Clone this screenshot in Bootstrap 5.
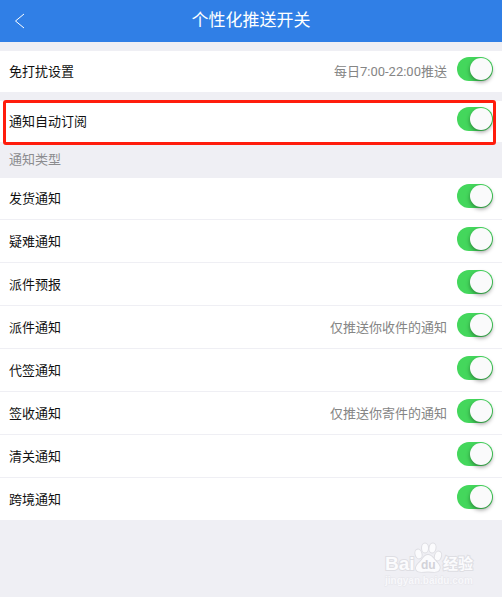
<!DOCTYPE html>
<html lang="zh-CN">
<head>
<meta charset="utf-8">
<meta name="viewport" content="width=device-width, initial-scale=1">
<title>个性化推送开关</title>
<link href="https://cdn.jsdelivr.net/npm/bootstrap@5.3.0/dist/css/bootstrap.min.css" rel="stylesheet">
<style>
body { background: #efeff4; color: #111; font: 400 13px/20px Roboto, "Noto Sans CJK SC", sans-serif; }
.topbar { background: #307fe6; height: 42px; }
.topbar h1 { font-size: 17px; line-height: 24px; font-weight: 400; padding-bottom: 2px; }
.side { width: 40px; }
.groups { gap: 9px; padding-top: 9px; }
.setting { min-height: 41px; padding: 0 9px; background: #fff; gap: 10px; }
.setting + .setting { border-top: 1px solid #efeff4; min-height: 43px; padding-top: 2px; }
.hint { color: #858585; }
.section-title { color: #8c8c8f; font-size: 13px; line-height: 20px; font-weight: 400; padding: 8px 9px; }
.form-check-input.toggle { width: 36px; height: 24px; margin: 0 0 6px; padding: 1px; border: 0; border-radius: 12px; background: #d8d8dc; display: flex; cursor: pointer; flex: none; }
.form-check-input.toggle::before { content: ""; width: 22px; height: 22px; border-radius: 50%; background: #fafafb; box-shadow: 0 2px 4px rgba(0,0,0,.4); }
.form-check-input.toggle:checked { background: #44d75c; justify-content: flex-end; }
.marker { position: absolute; inset: -1px 6px -3px 3px; border: 3px solid #ff1c0c; border-radius: 3px; pointer-events: none; }
.brand { padding: 21px 24px 8px; }
</style>
<script src="https://cdn.jsdelivr.net/npm/bootstrap@5.3.0/dist/js/bootstrap.bundle.min.js"></script>
</head>
<body class="d-flex flex-column min-vh-100">
<header class="topbar d-flex align-items-center text-white">
  <button class="side btn p-0 border-0 text-white d-flex justify-content-center" type="button" aria-label="返回">
    <svg width="12" height="16" viewBox="0 0 12 16" fill="none" stroke="currentColor" stroke-width="1"><path d="M10 1 1.500 8l8.500 7"/></svg>
  </button>
  <h1 class="flex-grow-1 text-center m-0">个性化推送开关</h1>
  <span class="side"></span>
</header>
<main class="groups d-flex flex-column">
  <section>
    <div class="setting d-flex align-items-center"><label class="flex-grow-1" for="s1">免打扰设置</label><span class="hint">每日7:00-22:00推送</span><input class="form-check-input toggle" type="checkbox" role="switch" id="s1" checked></div>
  </section>
  <section class="position-relative">
    <div class="setting d-flex align-items-center"><label class="flex-grow-1" for="s2">通知自动订阅</label><input class="form-check-input toggle" type="checkbox" role="switch" id="s2" checked></div>
    <div class="marker"></div>
  </section>
</main>
<section>
  <h2 class="section-title m-0">通知类型</h2>
  <div class="setting d-flex align-items-center"><label class="flex-grow-1" for="t1">发货通知</label><input class="form-check-input toggle" type="checkbox" role="switch" id="t1" checked></div>
  <div class="setting d-flex align-items-center"><label class="flex-grow-1" for="t2">疑难通知</label><input class="form-check-input toggle" type="checkbox" role="switch" id="t2" checked></div>
  <div class="setting d-flex align-items-center"><label class="flex-grow-1" for="t3">派件预报</label><input class="form-check-input toggle" type="checkbox" role="switch" id="t3" checked></div>
  <div class="setting d-flex align-items-center"><label class="flex-grow-1" for="t4">派件通知</label><span class="hint">仅推送你收件的通知</span><input class="form-check-input toggle" type="checkbox" role="switch" id="t4" checked></div>
  <div class="setting d-flex align-items-center"><label class="flex-grow-1" for="t5">代签通知</label><input class="form-check-input toggle" type="checkbox" role="switch" id="t5" checked></div>
  <div class="setting d-flex align-items-center"><label class="flex-grow-1" for="t6">签收通知</label><span class="hint">仅推送你寄件的通知</span><input class="form-check-input toggle" type="checkbox" role="switch" id="t6" checked></div>
  <div class="setting d-flex align-items-center"><label class="flex-grow-1" for="t7">清关通知</label><input class="form-check-input toggle" type="checkbox" role="switch" id="t7" checked></div>
  <div class="setting d-flex align-items-center"><label class="flex-grow-1" for="t8">跨境通知</label><input class="form-check-input toggle" type="checkbox" role="switch" id="t8" checked></div>
</section>
<footer class="brand d-flex justify-content-end">
  <svg width="94" height="46" viewBox="0 0 94 46" role="img" aria-label="Baidu 经验" fill="#fbfbfd" stroke="#dedee3" stroke-width="1" paint-order="stroke" font-family="Liberation Sans, Noto Sans CJK SC, sans-serif">
    <g stroke-width="2">
      <ellipse cx="34.500" cy="13" rx="3" ry="4.500" transform="rotate(-15 34.500 13)"/>
      <ellipse cx="41" cy="7" rx="3" ry="4.500"/>
      <ellipse cx="48.500" cy="7" rx="3" ry="4.500" transform="rotate(10 48.500 7)"/>
      <ellipse cx="54" cy="15" rx="3" ry="4.500" transform="rotate(15 54 15)"/>
      <path d="M44 14c-4 0-5 4-8 7-3 3-5 5-3.500 8 2 3 7 1.500 11.500 1.500s9 1.500 11-1.500c2-3 0-5-2.500-8-3-3-4.500-7-8.500-7z"/>
    </g>
    <g stroke-width="2" font-weight="700">
      <text x="1" y="29" font-size="19">Bai</text>
      <text x="59" y="28" font-size="15" font-family="Noto Sans CJK SC, sans-serif">经验</text>
    </g>
    <text x="37" y="28" font-size="12" font-weight="700" fill="#d2d2d8" stroke="none">du</text>
    <text x="1" y="43" font-size="10" font-weight="700" fill="#f8f8fb" stroke="#e6e6eb">jingyan.baidu.com</text>
  </svg>
</footer>
</body>
</html>
